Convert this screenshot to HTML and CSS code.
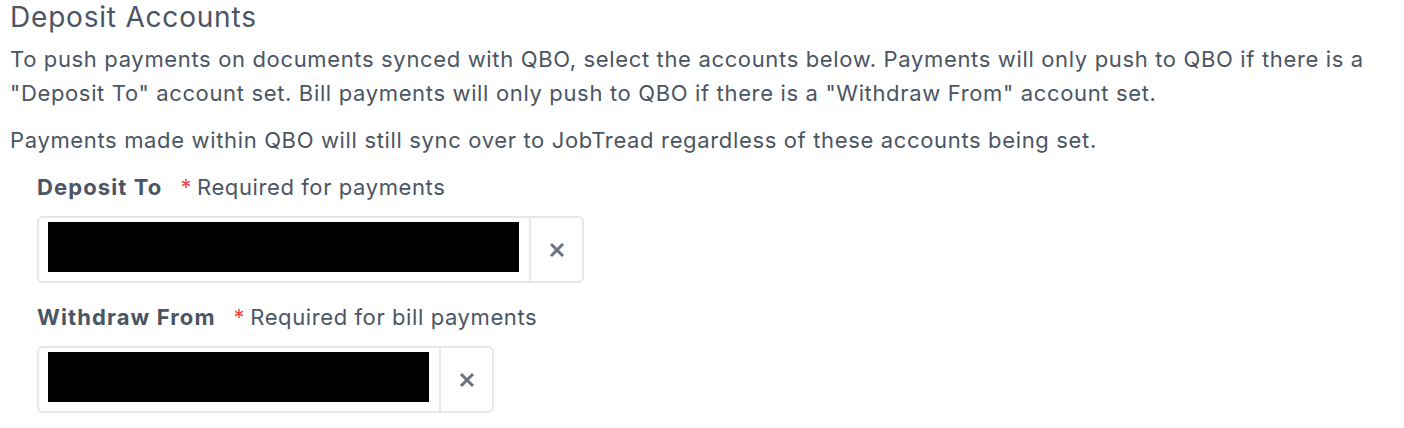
FILE: index.html
```html
<!DOCTYPE html>
<html lang="en">
<head>
    <meta charset="UTF-8">
    <meta name="viewport" content="width=device-width, initial-scale=1.0">
    <title>Deposit Accounts</title>
    <link rel="stylesheet" href="styles.css">
</head>
<body>
    <div id="deposit-accounts">
        <h2>Deposit Accounts</h2>
        <p>To push payments on documents synced with QBO, select the accounts below. Payments will only push to QBO if there is a "Deposit To" account set. Bill payments will only push to QBO if there is a "Withdraw From" account set.</p>
        <p>Payments made within QBO will still sync over to JobTread regardless of these accounts being set.</p>

        <div class="fields">
            <div class="field">
                <div class="field-label">
                    <span class="name">Deposit To</span>
                    <span class="required">*</span>
                    <span class="hint">Required for payments</span>
                </div>
                <div class="select-box wide">
                    <div class="select-value"><div class="redacted"></div></div>
                    <button class="clear-btn" title="Clear">
                        <svg width="16" height="16" viewBox="0 0 16 16"><path d="M2 2L14 14M14 2L2 14" stroke="currentColor" stroke-width="3"/></svg>
                    </button>
                </div>
            </div>

            <div class="field">
                <div class="field-label">
                    <span class="name">Withdraw From</span>
                    <span class="required">*</span>
                    <span class="hint">Required for bill payments</span>
                </div>
                <div class="select-box narrow">
                    <div class="select-value"><div class="redacted"></div></div>
                    <button class="clear-btn" title="Clear">
                        <svg width="16" height="16" viewBox="0 0 16 16"><path d="M2 2L14 14M14 2L2 14" stroke="currentColor" stroke-width="3"/></svg>
                    </button>
                </div>
            </div>
        </div>
    </div>
</body>
</html>
```

FILE: styles.css
```css
body {
    font-family: 'Inter', 'Noto Sans', sans-serif;
    background-color: #fff;
    color: #4b5563;
    margin: 0;
    padding: 0;
}

#deposit-accounts {
    padding: 0 10px;
}

h2 {
    font-size: 28px;
    font-weight: 400;
    letter-spacing: 0.8px;
    line-height: 34px;
    margin: 0;
}

p {
    font-size: 22px;
    letter-spacing: 0.65px;
    line-height: 34px;
    margin: 8px 0 0;
}

p + p {
    margin-top: 13px;
}

.fields {
    padding-left: 27px;
    margin-top: 13px;
}

.field + .field {
    margin-top: 17px;
}

.field-label {
    font-size: 22px;
    letter-spacing: 0.6px;
    line-height: 34px;
    display: flex;
    align-items: baseline;
}

.name {
    font-weight: 700;
    letter-spacing: 1.1px;
}

.required {
    color: #ef4444;
    margin: 0 5px 0 18px;
}

.select-box {
    display: flex;
    margin-top: 12px;
    height: 67px;
    border: 2px solid #e5e7eb;
    border-radius: 6px;
    box-sizing: border-box;
}

.select-box.wide {
    width: 547px;
}

.select-box.narrow {
    width: 457px;
}

.select-value {
    flex: 1;
    padding: 4px 10px 4px 9px;
    border-right: 2px solid #e5e7eb;
}

.redacted {
    background-color: #000;
    height: 50px;
}

.clear-btn {
    width: 51px;
    background: none;
    border: none;
    color: #6b7280;
    display: flex;
    align-items: center;
    justify-content: center;
    cursor: pointer;
    padding: 0;
}
```
